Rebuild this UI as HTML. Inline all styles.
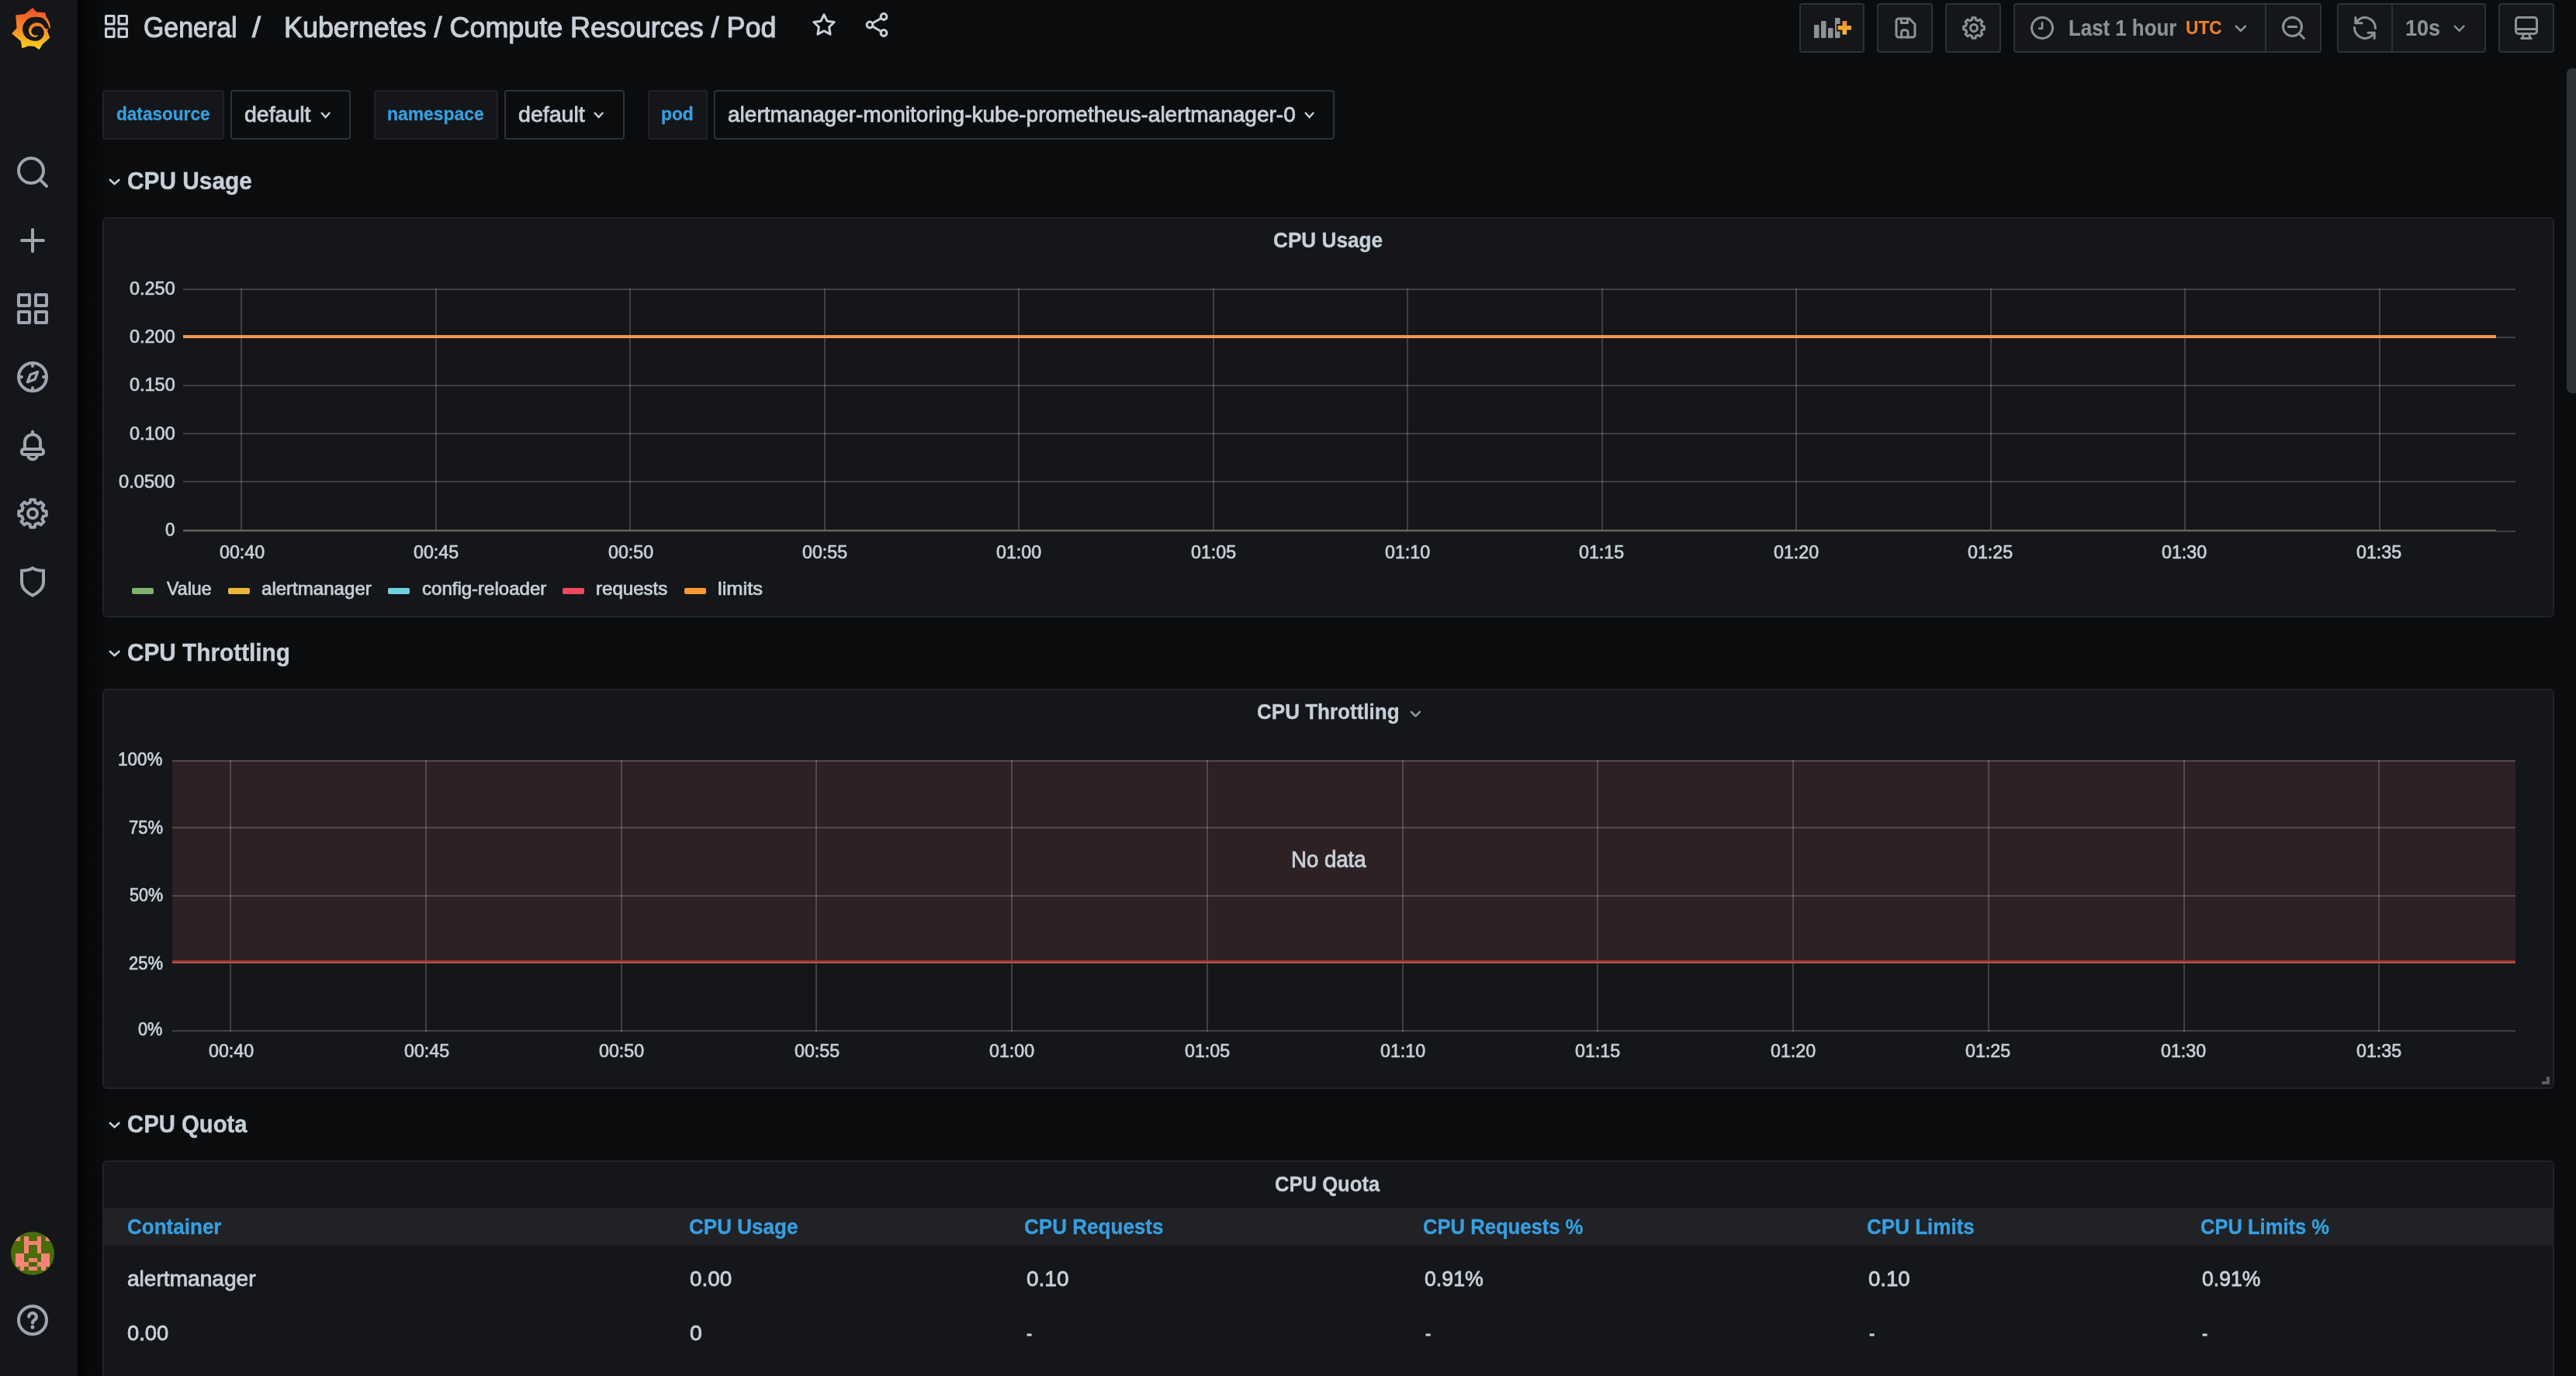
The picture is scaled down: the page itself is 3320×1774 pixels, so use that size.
<!DOCTYPE html><html><head><meta charset="utf-8"><title>Kubernetes / Compute Resources / Pod - Grafana</title><style>
*{margin:0;padding:0;box-sizing:border-box}
html,body{width:3320px;height:1774px;overflow:hidden;background:#0b0c0e;font-family:"Liberation Sans",sans-serif;}
#app{position:relative;width:3320px;height:1774px;overflow:hidden;will-change:transform}
.t{position:absolute;white-space:nowrap;line-height:1;transform-origin:0 0;}
.ic{position:absolute;overflow:visible}
#side{position:absolute;left:0;top:0;width:100px;height:1774px;background:#141619}
#sideshadow{position:absolute;left:100px;top:0;width:40px;height:1774px;background:linear-gradient(90deg,#030405 0%,#07080a 30%,#0b0c0e 100%)}
.btn{position:absolute;top:4px;height:64px;background:#141619;border:2px solid #2c3235;border-radius:4px}
.btn.l{border-radius:4px 0 0 4px} .btn.r{border-radius:0 4px 4px 0}
.vlab{position:absolute;top:116px;height:64px;background:#141619;border:2px solid #202226;border-radius:4px}
.vval{position:absolute;top:116px;height:64px;background:#0b0c0e;border:2px solid #2c3235;border-radius:4px}
.panel{position:absolute;left:132px;width:3160px;background:#141619;border:2px solid #202226;border-radius:6px}
.sw{position:absolute;top:758px;width:28px;height:8px;border-radius:2px}
.thead{position:absolute;left:134px;top:1558px;width:3156px;height:48px;background:#202226}
.rz{position:absolute;left:3276px;top:1388px;width:10px;height:10px;border-right:4px solid #5b5d61;border-bottom:4px solid #5b5d61}
.sb{position:absolute;left:3308px;top:88px;width:14px;height:419px;background:#2c3235;border-radius:7px 0 0 7px}
</style></head><body><div id="app"><nav class="sidemenu"><div id="side"></div><div id="sideshadow"></div><svg class="ic" style="left:8px;top:4px" width="64" height="64" viewBox="0 0 1376 1376">
<defs><linearGradient id="lg" x1="0" y1="1" x2="0" y2="0"><stop offset="0" stop-color="#fbd61c"/><stop offset="0.5" stop-color="#f68a25"/><stop offset="1" stop-color="#f04e2c"/></linearGradient></defs>
<path fill="url(#lg)" d="M735 128 L838 248 L1078 262 L1112 385 Q1225 520 1222 700 L1160 712 L1140 770 L1208 962 L1008 1140 L915 1290 L775 1196 L615 1188 L438 1252 L405 1052 L152 842 L292 692 L262 332 L520 300 Z"/>
<path fill="#141619" d="M1200 700C1192 679 1171 614 1150 575C1129 536 1108 495 1075 465C1042 435 996 409 950 395C904 381 852 379 800 383C748 387 685 399 640 420C595 441 560 473 530 510C500 547 474 598 462 640C450 682 449 718 455 760C461 802 476 852 500 890C524 928 557 964 600 990C643 1016 710 1040 760 1047C810 1054 860 1044 900 1030C940 1016 976 988 1000 960C1024 932 1038 892 1045 860C1052 828 1050 800 1040 770C1030 740 1008 701 985 680C962 659 929 648 900 642C871 636 838 637 810 645C782 653 754 668 735 690C716 712 700 748 697 775C694 802 704 830 720 850C736 870 763 890 790 897C817 904 865 894 880 893L885 915C871 920 831 945 800 945C769 945 727 932 700 915C673 898 653 868 640 840C627 812 618 782 620 750C622 718 637 679 655 650C673 621 701 592 730 575C759 558 797 548 830 545C863 542 900 545 930 555C960 565 988 584 1010 605C1032 626 1048 662 1065 680C1082 698 1094 710 1110 715C1126 720 1152 712 1160 712Z"/>
</svg><svg class="ic" style="left:18px;top:198px" width="48" height="48" viewBox="0 0 24 24" fill="none" stroke="#9fa4b0" stroke-width="2" stroke-linecap="round" stroke-linejoin="round" ><circle cx="11" cy="11" r="8"/><path d="M16.8 16.8L21 21"/></svg><svg class="ic" style="left:18px;top:286px" width="48" height="48" viewBox="0 0 24 24" fill="none" stroke="#9fa4b0" stroke-width="2" stroke-linecap="round" stroke-linejoin="round" ><path d="M5 12H19M12 5V19"/></svg><svg class="ic" style="left:18px;top:374px" width="48" height="48" viewBox="0 0 24 24" fill="none" stroke="#9fa4b0" stroke-width="2" stroke-linecap="round" stroke-linejoin="round" ><rect x="3" y="3" width="7" height="7" rx=".4"/><rect x="14" y="3" width="7" height="7" rx=".4"/><rect x="3" y="14" width="7" height="7" rx=".4"/><rect x="14" y="14" width="7" height="7" rx=".4"/></svg><svg class="ic" style="left:18px;top:462px" width="48" height="48" viewBox="0 0 24 24" fill="none" stroke="#9fa4b0" stroke-width="2" stroke-linecap="round" stroke-linejoin="round" ><circle cx="12" cy="12" r="9"/><path d="M15.3 8.7L13.5 13.5L8.7 15.3L10.5 10.5Z" stroke-width="1.7"/><path d="M12 4v1M12 19v1M4 12h1M19 12h1" stroke-width="1.9"/></svg><svg class="ic" style="left:18px;top:550px" width="48" height="48" viewBox="0 0 24 24" fill="none" stroke="#9fa4b0" stroke-width="2" stroke-linecap="round" stroke-linejoin="round" ><path d="M7 14.5V10.1a5 5 0 0 1 10 0v4.4M12 5.1V3.2"/><rect x="5" y="14.5" width="14" height="3.5" rx="1.4"/><path d="M9.1 18.7a2.9 2.4 0 0 0 5.8 0"/></svg><svg class="ic" style="left:18px;top:638px" width="48" height="48" viewBox="0 0 24 24" fill="none" stroke="#9fa4b0" stroke-width="2" stroke-linecap="round" stroke-linejoin="round" ><path d="M10.32 5.00 L10.59 3.11 L13.41 3.11 L13.68 5.00 L15.76 5.86 L17.29 4.72 L19.28 6.71 L18.14 8.24 L19.00 10.32 L20.89 10.59 L20.89 13.41 L19.00 13.68 L18.14 15.76 L19.28 17.29 L17.29 19.28 L15.76 18.14 L13.68 19.00 L13.41 20.89 L10.59 20.89 L10.32 19.00 L8.24 18.14 L6.71 19.28 L4.72 17.29 L5.86 15.76 L5.00 13.68 L3.11 13.41 L3.11 10.59 L5.00 10.32 L5.86 8.24 L4.72 6.71 L6.71 4.72 L8.24 5.86Z"/><circle cx="12" cy="12" r="3"/></svg><svg class="ic" style="left:18px;top:726px" width="48" height="48" viewBox="0 0 24 24" fill="none" stroke="#9fa4b0" stroke-width="2" stroke-linecap="round" stroke-linejoin="round" ><path d="M12 3.2C10.4 4.3 8 4.9 5 4.9V12.3C5 16.4 8 18.9 12 20.8C16 18.9 19 16.4 19 12.3V4.9C16 4.9 13.6 4.3 12 3.2Z" stroke-linejoin="miter"/></svg><svg class="ic" style="left:14px;top:1588px" width="56" height="56" viewBox="14 1588 56 56" shape-rendering="crispEdges"><defs><clipPath id="avc"><circle cx="42" cy="1616" r="28"/></clipPath></defs><g clip-path="url(#avc)"><rect x="14" y="1588" width="56" height="56" fill="#4a6c0a"/><rect x="20.00" y="1594.00" width="5.58" height="5.58" fill="#f98377"/><rect x="31.06" y="1594.00" width="5.58" height="5.58" fill="#f98377"/><rect x="47.65" y="1594.00" width="5.58" height="5.58" fill="#f98377"/><rect x="58.71" y="1594.00" width="5.58" height="5.58" fill="#f98377"/><rect x="31.06" y="1599.53" width="5.58" height="5.58" fill="#f98377"/><rect x="36.59" y="1599.53" width="5.58" height="5.58" fill="#f98377"/><rect x="42.12" y="1599.53" width="5.58" height="5.58" fill="#f98377"/><rect x="47.65" y="1599.53" width="5.58" height="5.58" fill="#f98377"/><rect x="31.06" y="1605.06" width="5.58" height="5.58" fill="#f98377"/><rect x="47.65" y="1605.06" width="5.58" height="5.58" fill="#f98377"/><rect x="31.06" y="1610.59" width="5.58" height="5.58" fill="#f98377"/><rect x="47.65" y="1610.59" width="5.58" height="5.58" fill="#f98377"/><rect x="20.00" y="1616.12" width="5.58" height="5.58" fill="#f98377"/><rect x="25.53" y="1616.12" width="5.58" height="5.58" fill="#f98377"/><rect x="53.18" y="1616.12" width="5.58" height="5.58" fill="#f98377"/><rect x="58.71" y="1616.12" width="5.58" height="5.58" fill="#f98377"/><rect x="20.00" y="1621.65" width="5.58" height="5.58" fill="#f98377"/><rect x="25.53" y="1621.65" width="5.58" height="5.58" fill="#f98377"/><rect x="36.59" y="1621.65" width="5.58" height="5.58" fill="#f98377"/><rect x="42.12" y="1621.65" width="5.58" height="5.58" fill="#f98377"/><rect x="53.18" y="1621.65" width="5.58" height="5.58" fill="#f98377"/><rect x="58.71" y="1621.65" width="5.58" height="5.58" fill="#f98377"/><rect x="20.00" y="1627.18" width="5.58" height="5.58" fill="#f98377"/><rect x="25.53" y="1627.18" width="5.58" height="5.58" fill="#f98377"/><rect x="31.06" y="1627.18" width="5.58" height="5.58" fill="#f98377"/><rect x="47.65" y="1627.18" width="5.58" height="5.58" fill="#f98377"/><rect x="53.18" y="1627.18" width="5.58" height="5.58" fill="#f98377"/><rect x="58.71" y="1627.18" width="5.58" height="5.58" fill="#f98377"/><rect x="25.53" y="1632.71" width="5.58" height="5.58" fill="#f98377"/><rect x="36.59" y="1632.71" width="5.58" height="5.58" fill="#f98377"/><rect x="42.12" y="1632.71" width="5.58" height="5.58" fill="#f98377"/><rect x="53.18" y="1632.71" width="5.58" height="5.58" fill="#f98377"/></g></svg><svg class="ic" style="left:18px;top:1678px" width="48" height="48" viewBox="0 0 24 24" fill="none" stroke="#9fa4b0" stroke-width="2" stroke-linecap="round" stroke-linejoin="round" ><circle cx="12" cy="12" r="9"/><path d="M9.6 9.8a2.4 2.4 0 1 1 3.6 2.1c-.8.5-1.2 1-1.2 1.9" stroke-width="2.1"/><circle cx="12" cy="16.5" r="1.25" fill="#9fa4b0" stroke="none"/></svg></nav><header class="page-toolbar"><svg class="ic" style="left:132px;top:16px" width="36" height="36" viewBox="0 0 24 24" fill="none" stroke="#c7d0d9" stroke-width="2" stroke-linecap="round" stroke-linejoin="round" ><rect x="3" y="3" width="7" height="7" rx=".4"/><rect x="14" y="3" width="7" height="7" rx=".4"/><rect x="3" y="14" width="7" height="7" rx=".4"/><rect x="14" y="14" width="7" height="7" rx=".4"/></svg><span class="t" style="left:184.60px;top:17.53px;font-size:36px;color:#c7d0d9;transform:scaleX(0.9408);-webkit-text-stroke:1.08px #c7d0d9;">General</span><span class="t" style="left:324.54px;top:17.53px;font-size:36px;color:#c7d0d9;transform:scaleX(1.0920);-webkit-text-stroke:1.08px #c7d0d9;">/</span><span class="t" style="left:366.05px;top:17.53px;font-size:36px;color:#c7d0d9;transform:scaleX(0.9970);-webkit-text-stroke:1.08px #c7d0d9;">Kubernetes / Compute Resources / Pod</span><svg class="ic" style="left:1044px;top:14px" width="36" height="36" viewBox="0 0 24 24" fill="none" stroke="#c7d0d9" stroke-width="2" stroke-linecap="round" stroke-linejoin="round" ><path d="M12 3.2l2.7 5.6 6.1.9-4.4 4.3 1 6.1L12 17.2 6.6 20.1l1-6.1L3.2 9.7l6.1-.9Z"/></svg><svg class="ic" style="left:1112px;top:14px" width="36" height="36" viewBox="0 0 24 24" fill="none" stroke="#c7d0d9" stroke-width="2" stroke-linecap="round" stroke-linejoin="round" ><circle cx="18" cy="5" r="2.6"/><circle cx="6" cy="12" r="2.6"/><circle cx="18" cy="19" r="2.6"/><path d="M8.3 10.7L15.7 6.3M8.3 13.3L15.7 17.7"/></svg><div class="btn " style="left:2319px;width:84px"></div><div class="btn " style="left:2419px;width:72px"></div><div class="btn " style="left:2507px;width:72px"></div><div class="btn l" style="left:2595px;width:326px"></div><div class="btn r" style="left:2919px;width:73px"></div><div class="btn l" style="left:3012px;width:72px"></div><div class="btn r" style="left:3082px;width:122px"></div><div class="btn " style="left:3220px;width:72px"></div><svg class="ic" style="left:2336px;top:20px" width="54" height="32" viewBox="2336 20 54 32"><defs><linearGradient id="pg" x1="0" y1="0" x2="0" y2="1"><stop offset="0" stop-color="#f0852e"/><stop offset="1" stop-color="#fbc02c"/></linearGradient></defs>
<g fill="#8e9197"><rect x="2338" y="32" width="6.5" height="17" rx="1"/><rect x="2347" y="27" width="6.5" height="22" rx="1"/><rect x="2356" y="36" width="6.5" height="13" rx="1"/><rect x="2365" y="23" width="6.5" height="26" rx="1"/></g>
<path d="M2377.3 25.5V46M2367 35.8H2387.5" stroke="#141619" stroke-width="9.5" fill="none"/>
<path d="M2377.3 27V44.6M2368.6 35.8H2386" stroke="url(#pg)" stroke-width="5.6" fill="none"/></svg><svg class="ic" style="left:2438px;top:18px" width="36" height="36" viewBox="0 0 24 24" fill="none" stroke="#8e9197" stroke-width="2" stroke-linecap="round" stroke-linejoin="round" ><path d="M4 6a2 2 0 0 1 2-2h9.2L20 8.8V18a2 2 0 0 1-2 2H6a2 2 0 0 1-2-2Z"/><path d="M8.4 20v-4.2a2 2 0 0 1 2-2h1.6a2 2 0 0 1 2 2V20M8.2 4v3.7h5.5V4"/></svg><svg class="ic" style="left:2526px;top:18px" width="36" height="36" viewBox="0 0 24 24" fill="none" stroke="#8e9197" stroke-width="2" stroke-linecap="round" stroke-linejoin="round" ><path d="M10.32 5.00 L10.59 3.11 L13.41 3.11 L13.68 5.00 L15.76 5.86 L17.29 4.72 L19.28 6.71 L18.14 8.24 L19.00 10.32 L20.89 10.59 L20.89 13.41 L19.00 13.68 L18.14 15.76 L19.28 17.29 L17.29 19.28 L15.76 18.14 L13.68 19.00 L13.41 20.89 L10.59 20.89 L10.32 19.00 L8.24 18.14 L6.71 19.28 L4.72 17.29 L5.86 15.76 L5.00 13.68 L3.11 13.41 L3.11 10.59 L5.00 10.32 L5.86 8.24 L4.72 6.71 L6.71 4.72 L8.24 5.86Z"/><circle cx="12" cy="12" r="3"/></svg><svg class="ic" style="left:2614px;top:18px" width="36" height="36" viewBox="0 0 24 24" fill="none" stroke="#8e9197" stroke-width="2" stroke-linecap="round" stroke-linejoin="round" ><circle cx="12" cy="12" r="9"/><path d="M12 7.5V12.5H9.5" stroke-width="1.8"/></svg><span class="t" style="left:2665.71px;top:21.43px;font-size:29.5px;color:#8e9197;transform:scaleX(0.8758);font-weight:700;-webkit-text-stroke:0.18px #8e9197;">Last 1 hour</span><span class="t" style="left:2817.12px;top:24.28px;font-size:24px;color:#e9812b;transform:scaleX(0.9452);font-weight:700;-webkit-text-stroke:0.14px #e9812b;">UTC</span><svg class="ic" style="left:2877.4px;top:28.5px" width="21.699999999999818" height="15.5" fill="none" stroke="#8e9197" stroke-width="2.5" stroke-linecap="round" stroke-linejoin="round"><path d="M4.75 4.75L10.849999999999909 10.75L16.949999999999818 4.75"/></svg><svg class="ic" style="left:2938px;top:18px" width="36" height="36" viewBox="0 0 24 24" fill="none" stroke="#8e9197" stroke-width="2" stroke-linecap="round" stroke-linejoin="round" ><circle cx="11" cy="11" r="8"/><path d="M16.8 16.8L21 21M7.5 11H14.5"/></svg><svg class="ic" style="left:3030px;top:18px" width="36" height="36" viewBox="0 0 24 24" fill="none" stroke="#8e9197" stroke-width="2" stroke-linecap="round" stroke-linejoin="round" ><path d="M3.9 3V7.8H9.3M14.7 16.2H20.1V21" stroke-linejoin="miter"/><path d="M4.2 7.6A9 9 0 0 1 21 12.3M19.8 16.4A9 9 0 0 1 3 11.7"/></svg><span class="t" style="left:3100.17px;top:21.43px;font-size:29.5px;color:#8e9197;transform:scaleX(0.9165);font-weight:700;-webkit-text-stroke:0.18px #8e9197;">10s</span><svg class="ic" style="left:3159.4px;top:28.5px" width="21.199999999999818" height="15.5" fill="none" stroke="#8e9197" stroke-width="2.5" stroke-linecap="round" stroke-linejoin="round"><path d="M4.75 4.75L10.599999999999909 10.75L16.449999999999818 4.75"/></svg><svg class="ic" style="left:3238px;top:18px" width="36" height="36" viewBox="0 0 24 24" fill="none" stroke="#8e9197" stroke-width="2" stroke-linecap="round" stroke-linejoin="round" ><rect x="3" y="3" width="18" height="14" rx="2.2"/><path d="M3 13H21M7.8 21H16.2M9.8 17.2L8.6 20.8M14.2 17.2L15.4 20.8"/></svg></header><div class="submenu-controls"><div class="vlab" style="left:132px;width:157px"></div><span class="t" style="left:150.15px;top:135.18px;font-size:24px;color:#379fe0;transform:scaleX(0.9413);font-weight:700;-webkit-text-stroke:0.29px #379fe0;">datasource</span><div class="vval" style="left:297px;width:155px"></div><span class="t" style="left:314.90px;top:133.90px;font-size:28px;color:#c7d0d9;transform:scaleX(1.0165);-webkit-text-stroke:0.84px #c7d0d9;">default</span><svg class="ic" style="left:410.4px;top:140.5px" width="19.200000000000045" height="15.0" fill="none" stroke="#c7d0d9" stroke-width="2.5" stroke-linecap="round" stroke-linejoin="round"><path d="M4.75 4.75L9.600000000000023 10.25L14.450000000000045 4.75"/></svg><div class="vlab" style="left:482px;width:160px"></div><span class="t" style="left:499.19px;top:135.18px;font-size:24px;color:#379fe0;transform:scaleX(0.9541);font-weight:700;-webkit-text-stroke:0.29px #379fe0;">namespace</span><div class="vval" style="left:650px;width:155px"></div><span class="t" style="left:667.90px;top:133.90px;font-size:28px;color:#c7d0d9;transform:scaleX(1.0201);-webkit-text-stroke:0.84px #c7d0d9;">default</span><svg class="ic" style="left:762.4px;top:140.5px" width="19.200000000000045" height="15.0" fill="none" stroke="#c7d0d9" stroke-width="2.5" stroke-linecap="round" stroke-linejoin="round"><path d="M4.75 4.75L9.600000000000023 10.25L14.450000000000045 4.75"/></svg><div class="vlab" style="left:835px;width:77px"></div><span class="t" style="left:852.19px;top:135.18px;font-size:24px;color:#379fe0;transform:scaleX(0.9501);font-weight:700;-webkit-text-stroke:0.29px #379fe0;">pod</span><div class="vval" style="left:920px;width:800px"></div><span class="t" style="left:937.92px;top:133.90px;font-size:28px;color:#c7d0d9;transform:scaleX(1.0004);-webkit-text-stroke:0.84px #c7d0d9;">alertmanager-monitoring-kube-prometheus-alertmanager-0</span><svg class="ic" style="left:1678.4px;top:140.5px" width="19.199999999999818" height="15.0" fill="none" stroke="#c7d0d9" stroke-width="2.5" stroke-linecap="round" stroke-linejoin="round"><path d="M4.75 4.75L9.599999999999909 10.25L14.449999999999818 4.75"/></svg></div><main class="dashboard-grid"><svg class="ic" style="left:137.4px;top:226.5px" width="21.19999999999999" height="15.0" fill="none" stroke="#c7d0d9" stroke-width="2.5" stroke-linecap="round" stroke-linejoin="round"><path d="M4.75 4.75L10.599999999999994 10.25L16.44999999999999 4.75"/></svg><span class="t" style="left:163.76px;top:216.91px;font-size:32px;color:#c7d0d9;transform:scaleX(0.9321);font-weight:700;-webkit-text-stroke:0.38px #c7d0d9;">CPU Usage</span><svg class="ic" style="left:137.4px;top:834.5px" width="21.19999999999999" height="15.0" fill="none" stroke="#c7d0d9" stroke-width="2.5" stroke-linecap="round" stroke-linejoin="round"><path d="M4.75 4.75L10.599999999999994 10.25L16.44999999999999 4.75"/></svg><span class="t" style="left:163.76px;top:824.91px;font-size:32px;color:#c7d0d9;transform:scaleX(0.9302);font-weight:700;-webkit-text-stroke:0.38px #c7d0d9;">CPU Throttling</span><svg class="ic" style="left:137.4px;top:1442.5px" width="21.19999999999999" height="15.0" fill="none" stroke="#c7d0d9" stroke-width="2.5" stroke-linecap="round" stroke-linejoin="round"><path d="M4.75 4.75L10.599999999999994 10.25L16.44999999999999 4.75"/></svg><span class="t" style="left:163.77px;top:1432.91px;font-size:32px;color:#c7d0d9;transform:scaleX(0.9154);font-weight:700;-webkit-text-stroke:0.38px #c7d0d9;">CPU Quota</span><div class="panel" style="top:280px;height:516px"></div><div class="panel" style="top:888px;height:516px"></div><div class="panel" style="top:1496px;height:400px"></div><span class="t" style="left:1641.23px;top:296.30px;font-size:28px;color:#c7d0d9;transform:scaleX(0.9350);font-weight:700;-webkit-text-stroke:0.34px #c7d0d9;">CPU Usage</span><span class="t" style="left:1620.24px;top:904.30px;font-size:28px;color:#c7d0d9;transform:scaleX(0.9296);font-weight:700;-webkit-text-stroke:0.34px #c7d0d9;">CPU Throttling</span><svg class="ic" style="left:1813.9px;top:913.0px" width="20.699999999999818" height="15.0" fill="none" stroke="#8e9197" stroke-width="2.5" stroke-linecap="round" stroke-linejoin="round"><path d="M4.75 4.75L10.349999999999909 10.25L15.949999999999818 4.75"/></svg><span class="t" style="left:1643.26px;top:1512.80px;font-size:28px;color:#c7d0d9;transform:scaleX(0.9148);font-weight:700;-webkit-text-stroke:0.34px #c7d0d9;">CPU Quota</span><svg class="ic" style="left:0;top:0" width="3320" height="1774" shape-rendering="crispEdges"><g fill="rgba(255,255,255,0.18)"><rect x="236" y="372" width="3006" height="2"/><rect x="236" y="434" width="3006" height="2"/><rect x="236" y="496" width="3006" height="2"/><rect x="236" y="558" width="3006" height="2"/><rect x="236" y="620" width="3006" height="2"/><rect x="236" y="684" width="3006" height="2"/><rect x="310" y="372" width="2" height="312"/><rect x="561" y="372" width="2" height="312"/><rect x="811" y="372" width="2" height="312"/><rect x="1062" y="372" width="2" height="312"/><rect x="1312" y="372" width="2" height="312"/><rect x="1563" y="372" width="2" height="312"/><rect x="1813" y="372" width="2" height="312"/><rect x="2064" y="372" width="2" height="312"/><rect x="2314" y="372" width="2" height="312"/><rect x="2565" y="372" width="2" height="312"/><rect x="2815" y="372" width="2" height="312"/><rect x="3066" y="372" width="2" height="312"/></g><rect x="236" y="683" width="2981" height="1" fill="#8b8672"/><rect x="236" y="432" width="2981" height="4" fill="#f5964c"/><rect x="222" y="980" width="3020" height="258" fill="rgba(234,112,112,0.12)"/><g fill="rgba(255,255,255,0.18)"><rect x="222" y="980" width="3020" height="2"/><rect x="222" y="1066" width="3020" height="2"/><rect x="222" y="1154" width="3020" height="2"/><rect x="222" y="1240" width="3020" height="2"/><rect x="222" y="1328" width="3020" height="2"/><rect x="296" y="980" width="2" height="350"/><rect x="548" y="980" width="2" height="350"/><rect x="800" y="980" width="2" height="350"/><rect x="1051" y="980" width="2" height="350"/><rect x="1303" y="980" width="2" height="350"/><rect x="1555" y="980" width="2" height="350"/><rect x="1807" y="980" width="2" height="350"/><rect x="2058" y="980" width="2" height="350"/><rect x="2310" y="980" width="2" height="350"/><rect x="2562" y="980" width="2" height="350"/><rect x="2814" y="980" width="2" height="350"/><rect x="3065" y="980" width="2" height="350"/></g><rect x="222" y="1238" width="3020" height="2" fill="#9a2e2e"/><rect x="222" y="1240" width="3020" height="2" fill="#ad5956"/></svg><span class="t" style="left:166.61px;top:359.68px;font-size:24px;color:#c7d0d9;transform:scaleX(0.9769);-webkit-text-stroke:0.72px #c7d0d9;">0.250</span><span class="t" style="left:166.61px;top:421.68px;font-size:24px;color:#c7d0d9;transform:scaleX(0.9769);-webkit-text-stroke:0.72px #c7d0d9;">0.200</span><span class="t" style="left:166.61px;top:484.18px;font-size:24px;color:#c7d0d9;transform:scaleX(0.9769);-webkit-text-stroke:0.72px #c7d0d9;">0.150</span><span class="t" style="left:166.61px;top:546.68px;font-size:24px;color:#c7d0d9;transform:scaleX(0.9769);-webkit-text-stroke:0.72px #c7d0d9;">0.100</span><span class="t" style="left:152.86px;top:609.18px;font-size:24px;color:#c7d0d9;transform:scaleX(0.9866);-webkit-text-stroke:0.72px #c7d0d9;">0.0500</span><span class="t" style="left:212.86px;top:671.18px;font-size:24px;color:#c7d0d9;transform:scaleX(0.9292);-webkit-text-stroke:0.72px #c7d0d9;">0</span><span class="t" style="left:282.86px;top:699.68px;font-size:24px;color:#c7d0d9;transform:scaleX(0.9677);-webkit-text-stroke:0.72px #c7d0d9;">00:40</span><span class="t" style="left:533.21px;top:699.68px;font-size:24px;color:#c7d0d9;transform:scaleX(0.9677);-webkit-text-stroke:0.72px #c7d0d9;">00:45</span><span class="t" style="left:783.56px;top:699.68px;font-size:24px;color:#c7d0d9;transform:scaleX(0.9677);-webkit-text-stroke:0.72px #c7d0d9;">00:50</span><span class="t" style="left:1033.91px;top:699.68px;font-size:24px;color:#c7d0d9;transform:scaleX(0.9677);-webkit-text-stroke:0.72px #c7d0d9;">00:55</span><span class="t" style="left:1284.26px;top:699.68px;font-size:24px;color:#c7d0d9;transform:scaleX(0.9677);-webkit-text-stroke:0.72px #c7d0d9;">01:00</span><span class="t" style="left:1534.61px;top:699.68px;font-size:24px;color:#c7d0d9;transform:scaleX(0.9677);-webkit-text-stroke:0.72px #c7d0d9;">01:05</span><span class="t" style="left:1784.96px;top:699.68px;font-size:24px;color:#c7d0d9;transform:scaleX(0.9677);-webkit-text-stroke:0.72px #c7d0d9;">01:10</span><span class="t" style="left:2035.31px;top:699.68px;font-size:24px;color:#c7d0d9;transform:scaleX(0.9677);-webkit-text-stroke:0.72px #c7d0d9;">01:15</span><span class="t" style="left:2285.66px;top:699.68px;font-size:24px;color:#c7d0d9;transform:scaleX(0.9677);-webkit-text-stroke:0.72px #c7d0d9;">01:20</span><span class="t" style="left:2536.01px;top:699.68px;font-size:24px;color:#c7d0d9;transform:scaleX(0.9677);-webkit-text-stroke:0.72px #c7d0d9;">01:25</span><span class="t" style="left:2786.36px;top:699.68px;font-size:24px;color:#c7d0d9;transform:scaleX(0.9677);-webkit-text-stroke:0.72px #c7d0d9;">01:30</span><span class="t" style="left:3036.71px;top:699.68px;font-size:24px;color:#c7d0d9;transform:scaleX(0.9677);-webkit-text-stroke:0.72px #c7d0d9;">01:35</span><div class="sw" style="left:170px;background:#7eb26d"></div><span class="t" style="left:214.86px;top:747.18px;font-size:24px;color:#c7d0d9;transform:scaleX(0.9667);-webkit-text-stroke:0.72px #c7d0d9;">Value</span><div class="sw" style="left:294px;background:#eab839"></div><span class="t" style="left:337.36px;top:747.18px;font-size:24px;color:#c7d0d9;transform:scaleX(1.0026);-webkit-text-stroke:0.72px #c7d0d9;">alertmanager</span><div class="sw" style="left:500px;background:#6ed0e0"></div><span class="t" style="left:543.86px;top:747.18px;font-size:24px;color:#c7d0d9;transform:scaleX(1.0011);-webkit-text-stroke:0.72px #c7d0d9;">config-reloader</span><div class="sw" style="left:725px;background:#f2495c"></div><span class="t" style="left:768.11px;top:747.18px;font-size:24px;color:#c7d0d9;transform:scaleX(1.0025);-webkit-text-stroke:0.72px #c7d0d9;">requests</span><div class="sw" style="left:882px;background:#ff9830"></div><span class="t" style="left:925.30px;top:747.18px;font-size:24px;color:#c7d0d9;transform:scaleX(1.0629);-webkit-text-stroke:0.72px #c7d0d9;">limits</span><span class="t" style="left:152.43px;top:966.68px;font-size:24px;color:#c7d0d9;transform:scaleX(0.9340);-webkit-text-stroke:0.72px #c7d0d9;">100%</span><span class="t" style="left:165.69px;top:1054.68px;font-size:24px;color:#c7d0d9;transform:scaleX(0.9172);-webkit-text-stroke:0.72px #c7d0d9;">75%</span><span class="t" style="left:166.61px;top:1141.68px;font-size:24px;color:#c7d0d9;transform:scaleX(0.8980);-webkit-text-stroke:0.72px #c7d0d9;">50%</span><span class="t" style="left:165.69px;top:1229.68px;font-size:24px;color:#c7d0d9;transform:scaleX(0.9172);-webkit-text-stroke:0.72px #c7d0d9;">25%</span><span class="t" style="left:178.36px;top:1314.68px;font-size:24px;color:#c7d0d9;transform:scaleX(0.9049);-webkit-text-stroke:0.72px #c7d0d9;">0%</span><span class="t" style="left:269.01px;top:1343.43px;font-size:24px;color:#c7d0d9;transform:scaleX(0.9677);-webkit-text-stroke:0.72px #c7d0d9;">00:40</span><span class="t" style="left:520.61px;top:1343.43px;font-size:24px;color:#c7d0d9;transform:scaleX(0.9677);-webkit-text-stroke:0.72px #c7d0d9;">00:45</span><span class="t" style="left:772.21px;top:1343.43px;font-size:24px;color:#c7d0d9;transform:scaleX(0.9677);-webkit-text-stroke:0.72px #c7d0d9;">00:50</span><span class="t" style="left:1023.81px;top:1343.43px;font-size:24px;color:#c7d0d9;transform:scaleX(0.9677);-webkit-text-stroke:0.72px #c7d0d9;">00:55</span><span class="t" style="left:1275.41px;top:1343.43px;font-size:24px;color:#c7d0d9;transform:scaleX(0.9677);-webkit-text-stroke:0.72px #c7d0d9;">01:00</span><span class="t" style="left:1527.01px;top:1343.43px;font-size:24px;color:#c7d0d9;transform:scaleX(0.9677);-webkit-text-stroke:0.72px #c7d0d9;">01:05</span><span class="t" style="left:1778.61px;top:1343.43px;font-size:24px;color:#c7d0d9;transform:scaleX(0.9677);-webkit-text-stroke:0.72px #c7d0d9;">01:10</span><span class="t" style="left:2030.21px;top:1343.43px;font-size:24px;color:#c7d0d9;transform:scaleX(0.9677);-webkit-text-stroke:0.72px #c7d0d9;">01:15</span><span class="t" style="left:2281.81px;top:1343.43px;font-size:24px;color:#c7d0d9;transform:scaleX(0.9677);-webkit-text-stroke:0.72px #c7d0d9;">01:20</span><span class="t" style="left:2533.41px;top:1343.43px;font-size:24px;color:#c7d0d9;transform:scaleX(0.9677);-webkit-text-stroke:0.72px #c7d0d9;">01:25</span><span class="t" style="left:2785.01px;top:1343.43px;font-size:24px;color:#c7d0d9;transform:scaleX(0.9677);-webkit-text-stroke:0.72px #c7d0d9;">01:30</span><span class="t" style="left:3036.61px;top:1343.43px;font-size:24px;color:#c7d0d9;transform:scaleX(0.9677);-webkit-text-stroke:0.72px #c7d0d9;">01:35</span><span class="t" style="left:1663.83px;top:1093.85px;font-size:29px;color:#c7d0d9;transform:scaleX(0.9511);-webkit-text-stroke:0.87px #c7d0d9;">No data</span><div class="rz"></div><div class="thead"></div><span class="t" style="left:163.74px;top:1567.80px;font-size:28px;color:#379fe0;transform:scaleX(0.9297);font-weight:700;-webkit-text-stroke:0.34px #379fe0;">Container</span><span class="t" style="left:887.74px;top:1567.80px;font-size:28px;color:#379fe0;transform:scaleX(0.9300);font-weight:700;-webkit-text-stroke:0.34px #379fe0;">CPU Usage</span><span class="t" style="left:1320.24px;top:1567.80px;font-size:28px;color:#379fe0;transform:scaleX(0.9305);font-weight:700;-webkit-text-stroke:0.34px #379fe0;">CPU Requests</span><span class="t" style="left:1834.06px;top:1567.80px;font-size:28px;color:#379fe0;transform:scaleX(0.9148);font-weight:700;-webkit-text-stroke:0.34px #379fe0;">CPU Requests %</span><span class="t" style="left:2406.24px;top:1567.80px;font-size:28px;color:#379fe0;transform:scaleX(0.9295);font-weight:700;-webkit-text-stroke:0.34px #379fe0;">CPU Limits</span><span class="t" style="left:2835.76px;top:1567.80px;font-size:28px;color:#379fe0;transform:scaleX(0.9118);font-weight:700;-webkit-text-stroke:0.34px #379fe0;">CPU Limits %</span><span class="t" style="left:163.92px;top:1635.10px;font-size:28px;color:#c7d0d9;transform:scaleX(1.0031);-webkit-text-stroke:0.84px #c7d0d9;">alertmanager</span><span class="t" style="left:889.42px;top:1635.10px;font-size:28px;color:#c7d0d9;transform:scaleX(0.9950);-webkit-text-stroke:0.84px #c7d0d9;">0.00</span><span class="t" style="left:1322.72px;top:1635.10px;font-size:28px;color:#c7d0d9;transform:scaleX(0.9988);-webkit-text-stroke:0.84px #c7d0d9;">0.10</span><span class="t" style="left:1836.47px;top:1635.10px;font-size:28px;color:#c7d0d9;transform:scaleX(0.9544);-webkit-text-stroke:0.84px #c7d0d9;">0.91%</span><span class="t" style="left:2408.43px;top:1635.10px;font-size:28px;color:#c7d0d9;transform:scaleX(0.9856);-webkit-text-stroke:0.84px #c7d0d9;">0.10</span><span class="t" style="left:2837.97px;top:1635.10px;font-size:28px;color:#c7d0d9;transform:scaleX(0.9505);-webkit-text-stroke:0.84px #c7d0d9;">0.91%</span><span class="t" style="left:163.94px;top:1705.30px;font-size:28px;color:#c7d0d9;transform:scaleX(0.9761);-webkit-text-stroke:0.84px #c7d0d9;">0.00</span><span class="t" style="left:889.41px;top:1705.30px;font-size:28px;color:#c7d0d9;transform:scaleX(1.0114);-webkit-text-stroke:0.84px #c7d0d9;">0</span><span class="t" style="left:1323.15px;top:1705.30px;font-size:28px;color:#c7d0d9;transform:scaleX(0.7700);-webkit-text-stroke:0.84px #c7d0d9;">-</span><span class="t" style="left:1836.65px;top:1705.30px;font-size:28px;color:#c7d0d9;transform:scaleX(0.7700);-webkit-text-stroke:0.84px #c7d0d9;">-</span><span class="t" style="left:2408.65px;top:1705.30px;font-size:28px;color:#c7d0d9;transform:scaleX(0.7700);-webkit-text-stroke:0.84px #c7d0d9;">-</span><span class="t" style="left:2838.15px;top:1705.30px;font-size:28px;color:#c7d0d9;transform:scaleX(0.7700);-webkit-text-stroke:0.84px #c7d0d9;">-</span></main><div class="sb"></div></div></body></html>
